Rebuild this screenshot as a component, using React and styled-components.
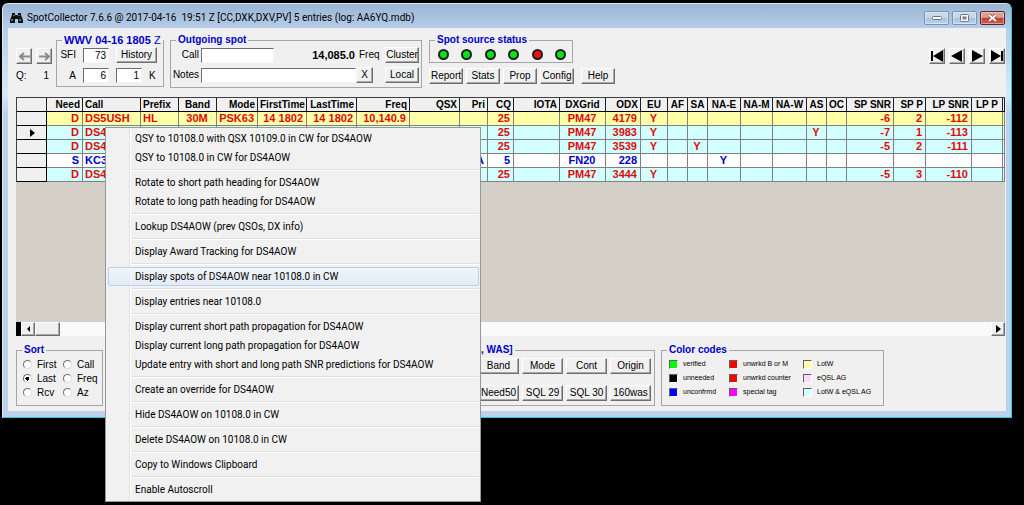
import React, { useState } from 'react';
import styled, { createGlobalStyle, css } from 'styled-components';

const GlobalStyle = createGlobalStyle`
  * {
    box-sizing: border-box;
  }

  body {
    margin: 0;
    background: #000;
    color: #000;
    font-family: "Liberation Sans", sans-serif;
    font-size: 10px;
    line-height: 12px;
    overflow: hidden;
  }

  button,
  input {
    margin: 0;
    padding: 0;
    font: inherit;
    color: inherit;
  }
`;

const Screen = styled.div`
  position: relative;
  min-height: 100vh;
  padding: 3px 12px 0 2px;
`;

const Window = styled.main`
  display: flex;
  flex-direction: column;
  height: calc(100vh - 90px);
  min-height: 360px;
  padding: 0 5px 6px;
  border: 1px solid #35c3da;
  border-top-color: #d8e6f4;
  border-left-color: #d8e6f4;
  border-radius: 6px 6px 0 0;
  background: linear-gradient(#9ab5d3, #b5cde7 24px, #dbe8f6 90px, #bcd1ea 110px);
`;

const TitleBar = styled.header`
  display: flex;
  align-items: center;
  gap: 4px;
  height: 24px;
  padding: 4px 1px 0 2px;
  flex: none;
`;

const Title = styled.h1`
  flex: 1;
  margin: 0;
  font-family: Roboto, "Open Sans", sans-serif;
  font-size: 10px;
  font-weight: 400;
  line-height: 16px;
  white-space: pre;
  overflow: hidden;
`;

const CaptionButtons = styled.div`
  display: flex;
  gap: 3px;
`;

const CaptionButton = styled.button`
  display: flex;
  align-items: center;
  justify-content: center;
  width: 25px;
  height: 14px;
  border: 1px solid ${props => (props.$close ? '#5c2430' : '#7d94b0')};
  border-radius: 2px;
  background: ${props => (props.$close
    ? 'linear-gradient(#dd9c90 45%, #c0402c 50%, #d0604a)'
    : 'linear-gradient(#c6d8ec 45%, #a9c1dc 50%, #bcd2ea)')};
  box-shadow: inset 0 0 0 1px rgba(255, 255, 255, 0.4);
`;

const Client = styled.div`
  display: flex;
  flex: 1;
  flex-direction: column;
  min-height: 0;
  padding: 6px 1px 5px 8px;
  background: #f0f0f0;
`;

const Toolbar = styled.div`
  display: flex;
  flex: none;
  align-items: flex-start;
  height: 63px;
`;

const Group = styled.fieldset`
  display: block;
  flex: none;
  width: ${props => props.$width}px;
  min-width: 0;
  margin: 0 0 0 ${props => props.$gap || 0}px;
  padding: 0;
  border: 1px solid #a6a6a6;
`;

const Legend = styled.legend`
  margin-left: ${props => props.$indent || 5}px;
  padding: 0 2px;
  color: #0000c8;
  font-size: ${props => (props.$large ? 11 : 10)}px;
  font-weight: 700;
  line-height: 12px;
  white-space: nowrap;
`;

const Zone = styled.span`
  font-weight: 400;
`;

const raised = css`
  border: 1px solid;
  border-color: #fff #6e6e6e #6e6e6e #fff;
  background: #f0f0f0;
  box-shadow: inset -1px -1px 0 #a8a8a8;
`;

const Button = styled.button`
  ${raised}
  width: ${props => props.$width || 34}px;
  height: 16px;
  line-height: 12px;
  text-align: center;
  white-space: nowrap;
`;

const IconButton = styled.button`
  ${raised}
  display: flex;
  align-items: center;
  justify-content: center;
  width: 16px;
  height: 16px;
`;

const History = styled.div`
  display: grid;
  grid-template-columns: 16px 16px;
  gap: 6px 4px;
  width: 40px;
  padding-top: 14px;
`;

const Queue = styled.span`
  text-align: ${props => (props.$end ? 'right' : 'left')};
  padding-right: ${props => (props.$end ? 3 : 0)}px;
`;

const WwvGrid = styled.div`
  display: grid;
  grid-template-columns: 19px 26px 40px;
  gap: 5px 7px;
  align-items: center;
  padding: 1px 0 3px;
`;

const Label = styled.label`
  text-align: right;
  white-space: nowrap;
`;

const Field = styled.input`
  width: ${props => props.$width}px;
  height: 15px;
  padding: 0 2px;
  border: 1px solid;
  border-color: #6e6e6e #f4f4f4 #f4f4f4 #6e6e6e;
  border-radius: 0;
  background: #fff;
  text-align: ${props => (props.$end ? 'right' : 'left')};
`;

const Pair = styled.div`
  display: flex;
  align-items: center;
  gap: 7px;
`;

const OutgoingRow = styled.div`
  display: flex;
  align-items: center;
  height: 16px;
  margin: 1px 2px 4px 0;

  ${Label} {
    width: 28px;
    margin-right: 2px;
  }

  ${Button}:last-child {
    margin-left: auto;
  }
`;

const FreqLabel = styled.span`
  width: 81px;
  margin-right: 4px;
  text-align: right;
  font-size: 11px;
  font-weight: 700;
`;

const Sources = styled.div`
  display: flex;
  flex-direction: column;
  margin-left: 7px;
`;

const Lights = styled.div`
  display: flex;
  justify-content: space-between;
  padding: 3px 6px 2px 8px;
`;

const Light = styled.span`
  width: 11px;
  height: 11px;
  border: 2px solid #1c1c1c;
  border-radius: 50%;
  background: ${props => (props.$ok ? '#00e61a' : '#f01010')};
`;

const SourceButtons = styled.div`
  display: flex;
  gap: 3px;
  margin-top: 5px;

  ${Button}:last-child {
    margin-left: 4px;
  }
`;

const Navigator = styled.div`
  display: flex;
  gap: 4px;
  margin-left: auto;
  padding-top: 14px;
`;

const GridPane = styled.div`
  flex: 1;
  min-height: 0;
  overflow: hidden;
  background: #d4d0c8;
`;

const Table = styled.table`
  width: 100%;
  table-layout: fixed;
  border-collapse: separate;
  border-spacing: 0;
  border-top: 1px solid #404040;
  border-left: 1px solid #404040;
`;

const Th = styled.th`
  height: 14px;
  padding: 0 2px;
  border-right: 1px solid #202020;
  border-bottom: 1px solid #000;
  background: #f0f0f0;
  font-size: 10px;
  font-weight: 700;
  line-height: 13px;
  text-align: ${props => props.$align};
  white-space: nowrap;
`;

const tones = {
  lotw: '#ffffa8',
  both: '#d2ffff',
  none: '#fff',
};

const Tr = styled.tr`
  height: 14px;
  background: ${props => tones[props.$tone]};
  color: ${props => (props.$tone === 'none' ? '#0000c8' : '#e00a0a')};
`;

const Td = styled.td`
  padding: 0 3px 0 2px;
  border-right: 1px solid #808080;
  border-bottom: 1px solid #808080;
  font-size: 11px;
  font-weight: 700;
  line-height: 13px;
  text-align: ${props => props.$align};
  white-space: nowrap;
  overflow: hidden;
`;

const RowHead = styled.td`
  padding: 0 0 0 13px;
  border-right: 1px solid #000;
  border-bottom: 1px solid #000;
  background: #f0f0f0;

  svg {
    display: block;
  }
`;

const ScrollBar = styled.div`
  display: flex;
  flex: none;
  justify-content: space-between;
  height: 14px;
  background: #fafafa;
`;

const ScrollStart = styled.div`
  display: flex;
  border-left: 5px solid #000;
`;

const ScrollButton = styled.button`
  ${raised}
  display: flex;
  align-items: center;
  justify-content: center;
  width: ${props => props.$width || 14}px;
  height: 14px;
`;

const Bottom = styled.div`
  display: flex;
  flex: none;
  margin-top: 8px;
`;

const SortGrid = styled.div`
  display: grid;
  grid-template-columns: 40px 1fr;
  gap: 1px 0;
  padding: 2px 0 5px 6px;
`;

const SortOption = styled.label`
  display: flex;
  align-items: center;
  gap: 5px;
  height: 13px;
`;

const Radio = styled.input`
  appearance: none;
  width: 9px;
  height: 9px;
  border: 1px solid;
  border-color: #707070 #dcdcdc #dcdcdc #707070;
  border-radius: 50%;
  background: #fff;

  &:checked {
    background: radial-gradient(#000 0 1px, #000 2px, #fff 2px);
  }
`;

const FilterButtons = styled.div`
  display: grid;
  grid-template-columns: repeat(4, 41px);
  gap: 11px 3px;
  justify-content: end;
  padding: 2px 3px 4px 0;
`;

const CodeGrid = styled.ul`
  display: grid;
  grid-template-columns: 60px 74px 1fr;
  margin: 0;
  padding: 1px 0 3px 7px;
  list-style: none;
`;

const Code = styled.li`
  display: flex;
  align-items: center;
  gap: 5px;
  height: 14px;
  font-size: 7px;
  line-height: 10px;
  white-space: nowrap;
`;

const Swatch = styled.span`
  width: 9px;
  height: 9px;
  border: 1px solid;
  border-color: #606060 #fff #fff #606060;
  background: ${props => props.$color};
`;

// the popup lies over the window and runs past its lower edge
const Menu = styled.div`
  position: absolute;
  top: 127px;
  left: 105px;
  width: 376px;
  padding: 1px 1px 2px 2px;
  border: 1px solid #979797;
  background: linear-gradient(90deg, #f1f1f1 23px, #e2e3e3 23px 24px, #fff 24px 25px, #f1f1f1 25px);
`;

const MenuItem = styled.button`
  display: block;
  width: 100%;
  height: 19px;
  padding: 0 0 0 26px;
  border: 1px solid transparent;
  border-radius: 2px;
  background: none;
  font-family: Roboto, "Open Sans", sans-serif;
  font-size: 10px;
  line-height: 17px;
  text-align: left;
  white-space: nowrap;

  ${props => props.$active && css`
    border-color: #b4d0f0;
    background: linear-gradient(rgba(240, 246, 252, 0.8), rgba(218, 231, 247, 0.6));
  `}
`;

const Separator = styled.hr`
  height: 2px;
  margin: 2px 0 2px 23px;
  border: 0;
  border-top: 1px solid #e0e0e0;
  background: #fff;
`;

const columns = [
  ['Need', 36, 'right'],
  ['Call', 58, 'left'],
  ['Prefix', 38, 'left'],
  ['Band', 38, 'center'],
  ['Mode', 41, 'right'],
  ['FirstTime', 49, 'right'],
  ['LastTime', 50, 'right'],
  ['Freq', 53, 'right'],
  ['QSX', 50, 'right'],
  ['Pri', 28, 'right'],
  ['CQ', 26, 'right'],
  ['IOTA', 46, 'right'],
  ['DXGrid', 46, 'center'],
  ['ODX', 35, 'right'],
  ['EU', 27, 'center'],
  ['AF', 20, 'center'],
  ['SA', 20, 'center'],
  ['NA-E', 33, 'center'],
  ['NA-M', 32, 'center'],
  ['NA-W', 34, 'center'],
  ['AS', 20, 'center'],
  ['OC', 20, 'center'],
  ['SP SNR', 47, 'right'],
  ['SP P', 32, 'right'],
  ['LP SNR', 46, 'right'],
  ['LP P', 31, 'center'],
];

const spots = [
  {
    tone: 'lotw', Need: 'D', Call: 'DS5USH', Prefix: 'HL', Band: '30M', Mode: 'PSK63', FirstTime: '14 1802', LastTime: '14 1802', Freq: '10,140.9', CQ: '25', DXGrid: 'PM47', ODX: '4179', EU: 'Y', 'SP SNR': '-6', 'SP P': '2', 'LP SNR': '-112',
  },
  {
    tone: 'both', current: true, Need: 'D', Call: 'DS4AOW', CQ: '25', DXGrid: 'PM47', ODX: '3983', EU: 'Y', AS: 'Y', 'SP SNR': '-7', 'SP P': '1', 'LP SNR': '-113',
  },
  {
    tone: 'both', Need: 'D', Call: 'DS4AOW', CQ: '25', DXGrid: 'PM47', ODX: '3539', EU: 'Y', SA: 'Y', 'SP SNR': '-5', 'SP P': '2', 'LP SNR': '-111',
  },
  {
    tone: 'none', Need: 'S', Call: 'KC3', Pri: 'A', CQ: '5', DXGrid: 'FN20', ODX: '228', 'NA-E': 'Y',
  },
  {
    tone: 'both', Need: 'D', Call: 'DS4AOW', CQ: '25', DXGrid: 'PM47', ODX: '3444', EU: 'Y', 'SP SNR': '-5', 'SP P': '3', 'LP SNR': '-110',
  },
];

const menu = [
  ['QSY to 10108.0 with QSX 10109.0 in CW for DS4AOW', 'QSY to 10108.0 in CW for DS4AOW'],
  ['Rotate to short path heading for DS4AOW', 'Rotate to long path heading for DS4AOW'],
  ['Lookup DS4AOW (prev QSOs, DX info)'],
  ['Display Award Tracking for DS4AOW'],
  ['Display spots of DS4AOW near 10108.0 in CW'],
  ['Display entries near 10108.0'],
  [
    'Display current short path propagation for DS4AOW',
    'Display current long path propagation for DS4AOW',
    'Update entry with short and long path SNR predictions for DS4AOW',
  ],
  ['Create an override for DS4AOW'],
  ['Hide DS4AOW on 10108.0 in CW'],
  ['Delete DS4AOW on 10108.0 in CW'],
  ['Copy to Windows Clipboard'],
  ['Enable Autoscroll'],
];

const codes = [
  ['verified', '#00ff00'],
  ['unwrkd B or M', '#ff0000'],
  ['LotW', '#ffffa8'],
  ['unneeded', '#000'],
  ['unwrkd counter', '#ff0000'],
  ['eQSL AG', '#ffd8ff'],
  ['unconfrmd', '#0000ff'],
  ['special tag', '#ff00ff'],
  ['LotW & eQSL AG', '#d2ffff'],
];

const Binoculars = () => (
  <svg width="13" height="12" viewBox="0 0 13 12">
    <path d="M2 1h3v2h3V1h3v2l2 5v3H8V7H5v4H0V8l2-5z" fill="#111" />
    <path d="M2 7v2M10 7v2M4 3v1M9 3v1" stroke="#b5cde7" />
  </svg>
);

const Arrow = ({ left }) => (
  <svg width="11" height="9" viewBox="0 0 11 9">
    <path
      d={left ? 'M5 1L1 4.500L5 8M1 4.500H11' : 'M6 1L10 4.500L6 8M10 4.500H0'}
      fill="none"
      stroke="#8a8a8a"
      strokeWidth="2"
    />
  </svg>
);

const Skip = ({ left, end }) => (
  <svg width="14" height="12" viewBox="0 0 14 12">
    <g transform={left ? 'matrix(-1 0 0 1 14 0)' : undefined}>
      <path d={end ? 'M1 0L11 6L1 12z' : 'M2 0L13 6L2 12z'} />
      {end && <path d="M11 1h2v10h-2z" />}
    </g>
  </svg>
);

const Triangle = ({ left }) => (
  <svg width="5" height="8" viewBox="0 0 5 8">
    <path d={left ? 'M4 1L1 4L4 7z' : 'M0 0L5 4L0 8z'} />
  </svg>
);

const SpotTable = () => (
  <Table>
    <colgroup>
      <col style={{ width: 30 }} />
      {columns.map(([name, width]) => <col key={name} style={{ width }} />)}
      <col />
    </colgroup>
    <thead>
      <tr>
        <Th />
        {columns.map(([name, , align]) => <Th key={name} $align={align}>{name}</Th>)}
        <Th />
      </tr>
    </thead>
    <tbody>
      {spots.map((spot, i) => (
        <Tr key={`${spot.Call}-${i}`} $tone={spot.tone}>
          <RowHead>{spot.current && <Triangle />}</RowHead>
          {columns.map(([name, , align]) => <Td key={name} $align={align}>{spot[name]}</Td>)}
          <Td />
        </Tr>
      ))}
    </tbody>
  </Table>
);

const App = () => {
  const [sort, setSort] = useState('Last');

  return (
    <Screen>
      <GlobalStyle />
      <Window>
        <TitleBar>
          <Binoculars />
          <Title>{'SpotCollector 7.6.6 @ 2017-04-16  19:51 Z [CC,DXK,DXV,PV] 5 entries (log: AA6YQ.mdb)'}</Title>
          <CaptionButtons>
            <CaptionButton aria-label="Minimize">
              <svg width="10" height="4" viewBox="0 0 10 4">
                <rect x="0.500" y="0.500" width="9" height="3" rx="1" fill="#fff" stroke="#66758a" />
              </svg>
            </CaptionButton>
            <CaptionButton aria-label="Maximize">
              <svg width="9" height="8" viewBox="0 0 9 8">
                <rect x="0.500" y="0.500" width="8" height="7" rx="1" fill="#fff" stroke="#66758a" />
                <rect x="3" y="3" width="3" height="2" fill="#8fa5c0" stroke="#66758a" />
              </svg>
            </CaptionButton>
            <CaptionButton $close aria-label="Close">
              <svg width="9" height="8" viewBox="0 0 9 8">
                <path d="M1 1L8 7M8 1L1 7" stroke="#6d3038" strokeWidth="3" />
                <path d="M1 1L8 7M8 1L1 7" stroke="#fff" strokeWidth="2" />
              </svg>
            </CaptionButton>
          </CaptionButtons>
        </TitleBar>

        <Client>
          <Toolbar>
            <History>
              <IconButton aria-label="Back"><Arrow left /></IconButton>
              <IconButton aria-label="Forward"><Arrow /></IconButton>
              <Queue>Q:</Queue>
              <Queue $end>1</Queue>
            </History>

            <Group $width={108}>
              <Legend $large>WWV 04-16 1805 <Zone>Z</Zone></Legend>
              <WwvGrid>
                <Label htmlFor="sfi">SFI</Label>
                <Field id="sfi" $width={26} $end defaultValue="73" />
                <Button $width={41}>History</Button>
                <Label htmlFor="a-index">A</Label>
                <Field id="a-index" $width={26} $end defaultValue="6" />
                <Pair>
                  <Field id="k-index" $width={26} $end defaultValue="1" />
                  <Label htmlFor="k-index">K</Label>
                </Pair>
              </WwvGrid>
            </Group>

            <Group $width={252} $gap={6}>
              <Legend>Outgoing spot</Legend>
              <OutgoingRow>
                <Label htmlFor="call">Call</Label>
                <Field id="call" $width={73} />
                <FreqLabel>14,085.0</FreqLabel>
                <span>Freq</span>
                <Button>Cluster</Button>
              </OutgoingRow>
              <OutgoingRow>
                <Label htmlFor="notes">Notes</Label>
                <Field id="notes" $width={155} />
                <Button $width={17}>X</Button>
                <Button>Local</Button>
              </OutgoingRow>
            </Group>

            <Sources>
              <Group $width={144}>
                <Legend>Spot source status</Legend>
                <Lights>
                  {[1, 1, 1, 1, 0, 1].map((ok, i) => <Light key={i} $ok={ok} />)}
                </Lights>
              </Group>
              <SourceButtons>
                {['Report', 'Stats', 'Prop', 'Config', 'Help'].map(name => <Button key={name}>{name}</Button>)}
              </SourceButtons>
            </Sources>

            <Navigator>
              <IconButton aria-label="First entry"><Skip left end /></IconButton>
              <IconButton aria-label="Previous entry"><Skip left /></IconButton>
              <IconButton aria-label="Next entry"><Skip /></IconButton>
              <IconButton aria-label="Last entry"><Skip end /></IconButton>
            </Navigator>
          </Toolbar>

          <GridPane>
            <SpotTable />
          </GridPane>
          <ScrollBar>
            <ScrollStart>
              <ScrollButton aria-label="Scroll left"><Triangle left /></ScrollButton>
              <ScrollButton aria-label="Scroll thumb" $width={25} />
            </ScrollStart>
            <ScrollButton aria-label="Scroll right"><Triangle /></ScrollButton>
          </ScrollBar>

          <Bottom>
            <Group $width={87}>
              <Legend>Sort</Legend>
              <SortGrid>
                {['First', 'Call', 'Last', 'Freq', 'Rcv', 'Az'].map(name => (
                  <SortOption key={name}>
                    <Radio
                      type="radio"
                      name="sort"
                      checked={sort === name}
                      onChange={() => setSort(name)}
                    />
                    {name}
                  </SortOption>
                ))}
              </SortGrid>
            </Group>

            <Group $width={547} $gap={5}>
              <Legend $indent={370}>, WAS]</Legend>
              <FilterButtons>
                {['Band', 'Mode', 'Cont', 'Origin', 'Need50', 'SQL 29', 'SQL 30', '160was'].map(name => (
                  <Button key={name} $width={41}>{name}</Button>
                ))}
              </FilterButtons>
            </Group>

            <Group $width={223} $gap={6}>
              <Legend>Color codes</Legend>
              <CodeGrid>
                {codes.map(([name, color]) => (
                  <Code key={name}>
                    <Swatch $color={color} />
                    {name}
                  </Code>
                ))}
              </CodeGrid>
            </Group>
          </Bottom>
        </Client>
      </Window>

      <Menu role="menu">
        {menu.map((items, i) => (
          <React.Fragment key={items[0]}>
            {i > 0 && <Separator />}
            {items.map(item => (
              <MenuItem key={item} role="menuitem" $active={i === 4}>{item}</MenuItem>
            ))}
          </React.Fragment>
        ))}
      </Menu>
    </Screen>
  );
};

export default App;
